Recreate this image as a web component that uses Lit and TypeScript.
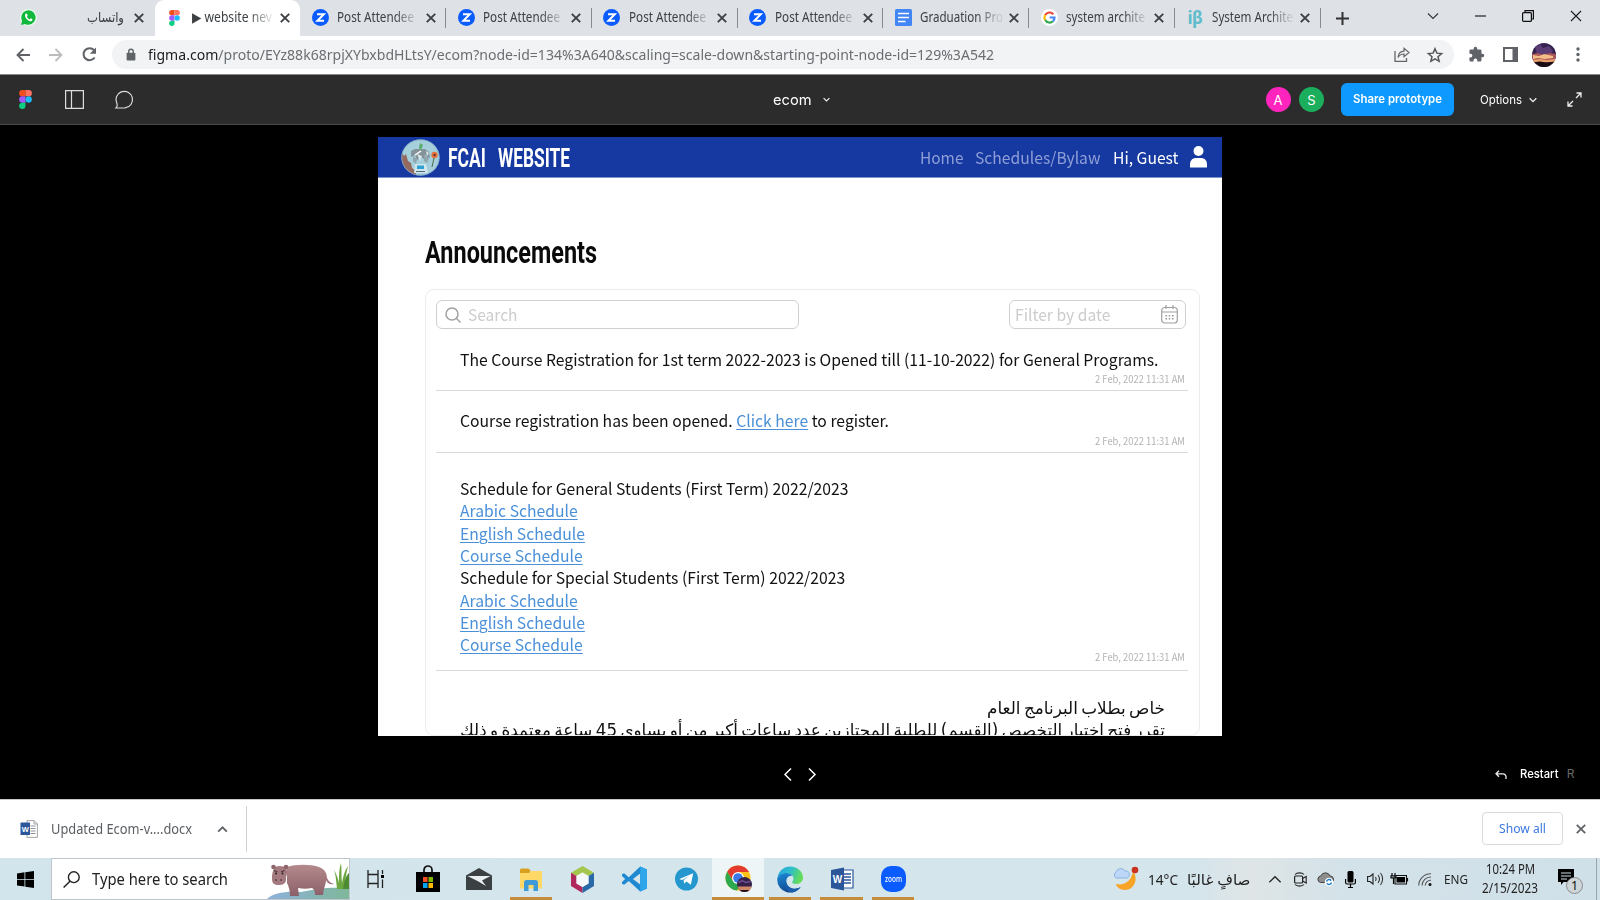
import { LitElement, html, svg, css } from "lit";
import { customElement, property } from "lit/decorators.js";

/** One line of text, condensed or widened to an exact measure. */
@customElement("fit-text")
class FitText extends LitElement {
  @property({ type: Number }) w = 0;
  static styles = css`
    :host { display: inline-block; white-space: nowrap; text-align: left; flex: none; }
    span { display: inline-block; white-space: nowrap; transform-origin: 0 50%; }
  `;
  render() {
    return html`<span><slot></slot></span>`;
  }
  firstUpdated() {
    const s = this.renderRoot.querySelector("span") as HTMLElement;
    this.style.width = "max-content";
    const n = s.getBoundingClientRect().width;
    this.style.width = this.w + "px";
    if (n) s.style.transform = `scaleX(${this.w / n})`;
    this.style.direction = "ltr";
  }
}

const ic = (w: number, h: number, vb: string, body: unknown) =>
  html`<svg width=${w} height=${h} viewBox=${vb} fill="none">${body}</svg>`;

const close = (n = 10, c = "#3c4043", sw = 1.9) =>
  ic(n, n, "0 0 10 10", svg`<path d="M.8.8l8.4 8.4M9.2.8L.8 9.2" stroke=${c} stroke-width=${sw}/>`);

const figma = (w: number, h: number) =>
  ic(w, h, "0 0 12 18", svg`
    <path d="M3 0h3v6H3a3 3 0 010-6z" fill="#f24e1e"/><path d="M6 0h3a3 3 0 010 6H6z" fill="#ff7262"/>
    <path d="M3 6h3v6H3a3 3 0 010-6z" fill="#a259ff"/><circle cx="9" cy="9" r="3" fill="#1abcfe"/>
    <path d="M3 12h3v3a3 3 0 11-3-3z" fill="#0acf83"/>`);

const icons: Record<string, () => unknown> = {
  wa: () => ic(17, 17, "0 0 16 16", svg`<circle cx="8" cy="8" r="8" fill="#e9fbee"/><path d="M1 15l1-3.7A6.8 6.8 0 118 14.8a7 7 0 01-3.300-.8z" fill="#12b83c"/><path d="M5.500 4.200c-1.600 1.600-.5 4 1.500 5.800 1.800 1.600 3.800 2 4.600.6.4-.8.2-1-1.600-1.800l-1 1C7.700 9.200 6.900 8.200 6.500 7.300l.8-1-.8-2z" fill="#fff"/>`),
  fg: () => figma(11, 16),
  zm: () => ic(17, 17, "0 0 17 17", svg`<circle cx="8.500" cy="8.500" r="8.500" fill="#0b5cff"/><path d="M5 5.200h6.800L5.400 11.800H12" stroke="#fff" stroke-width="2"/>`),
  doc: () => ic(17, 17, "0 0 17 17", svg`<rect width="17" height="17" rx="1.500" fill="#4285f4"/><path d="M3 4.500h11M3 8.500h11M3 12.500h7.500" stroke="#fff" stroke-width="1.700"/>`),
  g: () => ic(17, 17, "0 0 17 17", svg`<circle cx="8.500" cy="8.500" r="8.500" fill="#fff"/><g stroke-width="2.200"><path d="M12.300 5.200A5 5 0 004.200 6" stroke="#ea4335"/><path d="M4.200 6a5 5 0 000 5" stroke="#fbbc05"/><path d="M4.200 11a5 5 0 007.800 1.200" stroke="#34a853"/><path d="M12 12.200A5 5 0 0013.500 8.500H8.700" stroke="#4285f4"/></g>`),
  ib: () => html`<b class="ib">iβ</b>`,
};

const TABS = [
  { i: "wa", t: "واتساب", w: 37, rtl: true },
  { i: "fg", t: "▶ website nev", w: 80, on: true },
  { i: "zm", t: "Post Attendee", w: 77 },
  { i: "zm", t: "Post Attendee", w: 77 },
  { i: "zm", t: "Post Attendee", w: 77 },
  { i: "zm", t: "Post Attendee", w: 77 },
  { i: "doc", t: "Graduation Pro", w: 83 },
  { i: "g", t: "system archite", w: 79 },
  { i: "ib", t: "System Archite", w: 81 },
];

const chev = (w: number, h: number, d: string, c: string, sw = 1.3) =>
  ic(w, h, "0 0 12 8", svg`<path d=${d} stroke=${c} stroke-width=${sw}/>`);
const DOWN = "M1 1.500l5 5 5-5";
const UP = "M1 6.500l5-5 5 5";

const wordIcon = (s: number) =>
  ic(s, s, "0 0 24 24", svg`<path d="M12 3h11v18H12z" fill="#fff" stroke="#2b579a" stroke-width="1.200"/><path d="M14 7h7M14 10h7M14 13h7M14 16h7" stroke="#2b579a" stroke-width="1.300"/><path d="M1 3l13-2.500v23L1 21z" fill="#2b579a"/><text x="7.400" y="15.700" font-family="Liberation Sans" font-weight="700" font-size="10" text-anchor="middle" fill="#fff">W</text>`);

const docIcon = () =>
  ic(18, 18, "0 0 18 18", svg`<path d="M7 .6h7l3.400 3.400v13.400H7z" fill="#fff" stroke="#9a9a9a" stroke-width=".9"/><path d="M14 .6V4h3.400" stroke="#9a9a9a" stroke-width=".9"/><path d="M10.500 6h5M10.500 8.500h5M10.500 11h5M10.500 13.500h5" stroke="#8d9299" stroke-width="1"/><path d="M.5 2.500h9.500v12.500H.5z" fill="#2b579a"/><text x="5.200" y="11.500" font-family="Liberation Sans" font-weight="700" font-size="7.500" text-anchor="middle" fill="#fff">W</text>`);

const APPS = [
  { i: ic(17, 18, "0 0 17 18", svg`<path d="M1 0v4.500h10V0M1 18v-4.500h10V18M1 4.500v9M11 4.500v9M15.500 0v4M15.500 9.500V18" stroke="#222" stroke-width="1.300"/><path d="M14 5h3v3h-3z" fill="#000"/>`) },
  { i: ic(24, 28, "0 0 24 28", svg`<path d="M8 8V5a4 4 0 018 0v3" stroke="#111" stroke-width="1.700"/><path d="M0 7h24v20H0z" fill="#000"/><path d="M7 12h4.500v5H7z" fill="#f25022"/><path d="M12.500 12H17v5h-4.500z" fill="#7fba00"/><path d="M7 18h4.500v5H7z" fill="#00a4ef"/><path d="M12.500 18H17v5h-4.500z" fill="#ffb900"/>`) },
  { i: ic(26, 22, "0 0 26 22", svg`<path d="M0 7.500L13 0l13 7.500V22H0z" fill="#3b4043"/><path d="M1.500 8h23L16 12.500l4 5.500L11.500 13z" fill="#e8f0f2"/>`) },
  { u: 1, i: ic(24, 23, "0 0 24 23", svg`<path d="M1 2a1.500 1.500 0 011.500-1.500h7L12 3h-1v4H1z" fill="#d9a020"/><path d="M1 5h9l2-2h11v17.500H1z" fill="#ffd866"/><path d="M5 23v-8.500A2.500 2.500 0 017.500 12h9a2.500 2.500 0 012.500 2.500V23h-4.500v-6h-5v6z" fill="#3f9bd8"/>`) },
  { i: ic(23, 27, "0 0 23 27", svg`<path d="M11.500 0L23 6.800 17.500 10l-6-3.500L5.500 10 0 6.800z" fill="#a4c64c"/><path d="M0 6.800L5.500 10v7.500l6 3.500v6L0 20z" fill="#b0275c"/><path d="M23 6.800L17.500 10v7.500l-6 3.500v6L23 20z" fill="#2a68a8"/><path d="M11.500 6.500l6 3.500v7.500l-6 3.500-6-3.500V10z" fill="#f4f8fa"/>`) },
  { i: ic(25, 26, "0 0 24 24", svg`<path d="M17.500 0L24 2.800v18.400L17.500 24 6.500 13.800 2 17.500 0 16.500v-1.700L3 12 0 9.200V7.500l2-1 4.500 3.700zM17.500 6.800L10.500 12l7 5.200z" fill="#1f8ad2" fill-rule="evenodd"/><path d="M17.500 0L24 2.800v18.400L17.500 24z" fill="#2fa5ea"/>`) },
  { i: ic(23, 24, "0 0 24 24", svg`<circle cx="12" cy="12" r="12" fill="#2497cf"/><path d="M4.500 12L19 6l-2.500 12-4.500-3.400-2.500 2.400-.5-4 6-4.500-7.500 4.500z" fill="#fff"/>`) },
  { u: 1, on: true, i: ic(28, 30, "0 0 28 30", svg`<circle cx="14" cy="14" r="12.500" fill="#fbc116"/><path d="M3.200 7.700L9 17l5-9h11A12.500 12.500 0 003.200 7.700z" fill="#e33b2e"/><path d="M3.200 7.700A12.500 12.500 0 0013 26.500l4-7.500-8-2z" fill="#2da94f"/><circle cx="14" cy="14" r="6" fill="#fff"/><circle cx="14" cy="14" r="4.800" fill="#3c79e6"/><circle cx="20.500" cy="20.500" r="7.500" fill="#35204a"/><path d="M13.500 22.500h14a7.500 7.500 0 01-3 5h-8z" fill="#d08a68"/><path d="M15.500 26h10a7.500 7.500 0 01-10 0z" fill="#241018"/><path d="M14.500 18.500l4-2 3 2 5-1" stroke="#6f5091" stroke-width="1.500"/>`) },
  { u: 1, i: ic(26, 27, "0 0 24 24", svg`
    <defs><linearGradient id="e1" x1="0" y1="0" x2="1" y2=".3"><stop stop-color="#1f9fe0"/><stop offset=".55" stop-color="#2fc0c8"/><stop offset="1" stop-color="#62dc5a"/></linearGradient><linearGradient id="e2" x2=".3" y2="1"><stop stop-color="#1b8ad8"/><stop offset="1" stop-color="#114a8f"/></linearGradient></defs>
    <path d="M.4 10.500C1.300 4.500 6 0 12 0c7 0 12 5 12 10.200 0 3.800-3 6-6 6-2.500 0-4-.8-4-1.600s1.200-1.200 1.200-3.200C15.200 8.500 12.500 6 8.800 6 5 6 1.800 8 .4 10.500z" fill="url(#e1)"/>
    <path d="M.2 12C.2 8.500 4.500 6 8.800 6c2.500 0 4.500 1.200 5.600 2.800-3-.8-5.800 1.400-5.800 4.700 0 4 4 7 8 7 2.200 0 3.800-.6 5.400-1.500A12 12 0 01.2 12z" fill="url(#e2)"/>
    <path d="M8.700 14.500c.5 4 4.500 6.500 8 6 2-.1 4-.8 5-1.700 0 1-3.500 4.800-7.700 5.100C8 22.500 7 18 8.700 14.500z" fill="#1a5fae"/>`) },
  { u: 1, i: wordIcon(24) },
  { u: 1, i: html`<span class="zoomapp"><fit-text .w=${17}>zoom</fit-text></span>` },
];

const LINKS = [
  ["Schedule for General Students (First Term) 2022/2023", 388.5],
  ["Arabic Schedule", 117.7, 1],
  ["English Schedule", 124.9, 1],
  ["Course Schedule", 122.7, 1],
  ["Schedule for Special Students (First Term) 2022/2023", 385.2],
  ["Arabic Schedule", 117.7, 1],
  ["English Schedule", 124.9, 1],
  ["Course Schedule", 122.7, 1],
] as [string, number, number?][];

@customElement("app-root")
class AppRoot extends LitElement {
  static styles = css`
    :host { display: flex; flex-direction: column; width: 1600px; height: 900px; overflow: hidden; background: #000; font-family: "Noto Sans", "DejaVu Sans", sans-serif; color: #3c4043; }
    * { box-sizing: border-box; }
    svg { display: block; flex: none; overflow: visible; }
    .tabs { height: 36px; background: #dee1e6; display: flex; padding-left: 8.800px; flex: none; }
    .tab { width: 145.750px; flex: none; height: 36px; display: grid; grid-template-columns: 22px 82px 1fr; column-gap: 6px; padding: 0 10.500px 1px 9px; align-items: center; font-size: 13.500px; position: relative; }
    .tab > :first-child { justify-self: center; }
    .tab > :last-child { justify-self: end; }
    .tab::after { content: ""; position: absolute; right: 0; top: 8px; width: 1px; height: 20px; background: #868b90; }
    .tab.first::after, .tab.on::after { display: none; }
    .tab.on { background: #fff; border-radius: 9px 9px 0 0; }
    .lbl { overflow: hidden; white-space: nowrap; line-height: 20px; margin-top: -1px; -webkit-mask-image: linear-gradient(90deg, #000 70%, rgba(0,0,0,.15) 96%); mask-image: linear-gradient(90deg, #000 70%, rgba(0,0,0,.15) 96%); }
    .lbl.rtl { text-align: right; -webkit-mask: none; mask: none; margin-right: 3.500px; }
    .ib { font-size: 17px; color: #5fbccb; line-height: 20px; letter-spacing: -.5px; }
    .plus { width: 44px; display: grid; place-items: center; }
    .win { margin-left: auto; display: grid; grid-template-columns: repeat(3, 47.700px) 48px; align-items: center; justify-items: center; padding-bottom: 5px; }
    .tool { height: 38px; flex: none; background: #fff; display: flex; align-items: center; padding-bottom: 1px; }
    .cell { display: grid; place-items: center; flex: none; }
    .w33 { width: 33px; } .w34 { width: 34px; }
    .nav { display: flex; padding-left: 6.500px; width: 112px; flex: none; }
    .omni { width: 1342px; height: 29px; border-radius: 15px; background: #f1f3f4; display: flex; align-items: center; padding: 0 2.500px 0 14px; font-size: 15px; color: #6a6e72; }
    .url { margin-left: 12px; line-height: 24px; margin-top: -1px; }
    .url b { font-weight: 400; color: #202124; }
    .push { margin-left: auto; }
    .ext { display: flex; padding-left: 6px; }
    .ava { width: 24px; height: 24px; border-radius: 50%; overflow: hidden; }
    .fbar { height: 51px; flex: none; background: #2c2c2c; border-top: 1px solid #8a8a8a; border-bottom: 1px solid #484848; display: grid; grid-template-columns: 772.500px 1fr auto; align-items: center; font-family: Inter, sans-serif; color: #fff; }
    .row { display: flex; align-items: center; }
    .fl { padding-left: 18.500px; }
    .fl :nth-child(2) { margin-left: 33.500px; } .fl :nth-child(3) { margin-left: 31px; }
    .ecom { font-size: 14.500px; gap: 12px; line-height: 20px; }
    .who { width: 25px; height: 25px; border-radius: 50%; display: grid; place-items: center; font-size: 13px; margin-right: 8.500px; }
    .a { background: #ff24bd; } .s { background: #1bae5c; }
    .share { width: 113px; height: 33px; border-radius: 6px; background: #0d99ff; display: grid; place-items: center; font-size: 12px; font-weight: 600; margin-left: 8.500px; line-height: 20px; padding-bottom: 1px; }
    .opt { font-size: 12px; margin-left: 26px; gap: 6.500px; line-height: 20px; }
    .exp { margin: 0 18px 0 30.500px; }
    .stage { height: 674px; flex: none; padding: 12px 378px 0; display: flex; flex-direction: column; }
    .page { width: 844px; height: 599px; background: #fff; overflow: hidden; font-family: "Noto Sans CJK SC", sans-serif; color: #111; font-size: 16.300px; display: flex; flex-direction: column; }
    .head { height: 41px; flex: none; background: #1538a1; border-bottom: 1px solid #8093cd; display: flex; align-items: center; padding: 0 15px 0 22.500px; color: #fff; }
    .brand { font: 700 25px/34px "Roboto", sans-serif; margin: 3px 0 0 8px; }
    .brand + .brand { margin-left: 12px; }
    .menu { margin-left: auto; display: flex; line-height: 24px; gap: 12px; align-items: center; color: #8f9fd6; }
    .menu fit-text { margin-top: -1px; }
    .menu .hi { color: #fff; }
    h1 { margin: 53px 0 0 47px; font: 700 31px/44px "Roboto", sans-serif; height: 44px; color: #0a0a0a; flex: none; }
    .card { margin: 14px 0 0 47px; width: 775px; height: 447px; flex: none; border: 1px solid #ececec; border-radius: 9px; padding: 10px 10px 0; overflow: hidden; }
    .filters { display: flex; justify-content: space-between; padding-right: 3px; }
    .inp { height: 29px; border: 1px solid #cfcfcf; border-radius: 6px; display: flex; align-items: center; color: #ccc; line-height: 24px; padding: 0 8px; background: #fff; }
    .inp fit-text { margin-top: -2px; }
    .q { width: 363px; gap: 7px; } .d { width: 177px; justify-content: space-between; padding: 0 7px 0 5px; }
    .item { border-bottom: 1px solid #dadada; padding-left: 24px; display: flex; flex-direction: column; width: 752px; line-height: 22.300px; flex: none; }
    .i1 { height: 61.500px; padding-top: 18.500px; } .i2 { height: 62px; padding-top: 18.500px; } .i3 { height: 218px; padding-top: 24.700px; }
    .item .line { height: 22.300px; white-space: pre; display: block; flex: none; }
    .date { font-size: 10px; line-height: 12px; color: #b3b3b3; margin: auto 3px 5px auto; height: 12px; flex: none; }
    .i3 .date { margin: -5px 3px 0 auto; }
    a { color: #4a90d9; text-decoration: underline; text-decoration-thickness: 1px; text-underline-offset: 2px; }
    .ar { font-family: "DejaVu Sans", sans-serif; padding: 26px 24px 0; direction: rtl; line-height: 22px; font-size: 17px; word-spacing: -2px; }
    .ar div { height: 22px; }
    .foot { flex: 1; display: grid; grid-template-columns: 1fr 46px 1fr; margin-right: -378px; margin-left: -378px; align-items: center; color: #fff; font-family: Inter, sans-serif; padding-top: 13px; }
    .pg { display: flex; justify-content: center; gap: 16px; }
    .rs { justify-self: end; display: flex; align-items: center; font-size: 12px; font-weight: 500; margin-right: 25.500px; line-height: 16px; }
    .rs svg { margin-right: 13px; } .rs .r { margin-left: 8px; color: #6a6a6a; font-weight: 400; }
    .dl { height: 59px; flex: none; background: #fff; border-top: 1px solid #c9c9c9; display: flex; align-items: center; font-size: 13.500px; color: #5a5e62; padding: 0 14px 0 20px; }
    .dl .name { margin: 0 24.500px 0 13px; }
    .dl .sep { width: 1px; height: 46px; background: #cfd1d4; margin-left: 18.500px; }
    .all { margin-left: auto; width: 81px; height: 33px; border: 1px solid #d8dadd; border-radius: 4px; display: grid; place-items: center; color: #3b78e0; margin-right: 13px; font-size: 13px; line-height: 20px; margin-top: -1px; padding-bottom: 1px; }
    .task { height: 42px; flex: none; background: linear-gradient(90deg, #d3e5ec, #d5e5ec 75%, #dfe5e6 78%, #d3e2e9 84%, #d0e0e8); display: flex; color: #222; }
    .start { width: 50.500px; display: grid; place-items: center; }
    .search { width: 299.500px; background: #fff; border: 1px solid #bcc6cb; display: flex; align-items: center; padding-left: 11px; font-size: 16px; line-height: 24px; overflow: hidden; }
    .search .t { margin: 0 38.500px 0 12.500px; }
    .app { width: 51.750px; display: grid; place-items: center; position: relative; }
    .app.on { background: #eef5f7; }
    .app.u::after { content: ""; position: absolute; left: 4.500px; right: 5px; bottom: 0; height: 3px; background: #c68c3c; }
    .app.on::after { left: 0; right: 0; }
    .zoomapp { width: 25px; height: 26px; border-radius: 10px; background: #0b5cff; color: #fff; display: grid; place-items: center; font-size: 8px; line-height: 12px; font-weight: 500; }
    .tray { margin-left: auto; display: flex; align-items: center; font-size: 15px; }
    .up { width: 38px; padding-left: 11px; }
    .t24 { width: 24.800px; }
    .wx { margin: 0 9px 0 8.500px; line-height: 20px; }
    .clock { display: grid; justify-items: center; font-size: 13.500px; line-height: 19px; width: 56px; margin-left: 14px; }
    .note { margin: 4px 13.500px 0 19.500px; }
    .edge { width: 4px; height: 42px; border-left: 1px solid #9aa5aa; }
    .eng { font-size: 13px; margin-left: 7px; }
  `;

  date() {
    return html`<div class="date"><fit-text .w=${90}>2 Feb, 2022 11:31 AM</fit-text></div>`;
  }

  render() {
    return html`
      <div class="tabs">
        ${TABS.map((t, n) => html`<div class="tab ${t.on ? "on" : ""} ${n ? "" : "first"}">
          <span>${icons[t.i]()}</span><span class="lbl ${t.rtl ? "rtl" : ""}"><fit-text .w=${t.w}>${t.t}</fit-text></span>${close()}</div>`)}
        <div class="plus">${ic(13, 13, "0 0 13 13", svg`<path d="M6.500 0v13M0 6.500h13" stroke="#333" stroke-width="2"/>`)}</div>
        <div class="win">
          ${chev(12, 8, DOWN, "#333", 1.1)}
          ${ic(11, 2, "0 0 11 2", svg`<path d="M0 1h11" stroke="#222" stroke-width="1.200"/>`)}
          ${ic(12, 12, "0 0 12 12", svg`<rect x=".6" y="2.600" width="8.800" height="8.800" rx="1" stroke="#111" stroke-width="1.200"/><path d="M3 2V.6h8.400V9H10" stroke="#111" stroke-width="1.200"/>`)}
          ${close(12, "#222", 1)}
        </div>
      </div>
      <div class="tool">
        <div class="nav">
          <div class="cell w33">${ic(14, 14, "0 0 14 14", svg`<path d="M14 7H1.500M7.500 1l-6 6 6 6" stroke="#5f6368" stroke-width="1.900"/>`)}</div>
          <div class="cell w33">${ic(14, 14, "0 0 14 14", svg`<path d="M0 7h12.500M6.500 1l6 6-6 6" stroke="#babcbe" stroke-width="1.800"/>`)}</div>
          <div class="cell w34">${ic(15, 15, "0 0 15 15", svg`<path d="M12.600 10.500a6 6 0 11-.5-7.300" stroke="#5f6368" stroke-width="2"/><path d="M14 .5v6.200H7.800z" fill="#5f6368"/>`)}</div>
        </div>
        <div class="omni">
          ${ic(10, 13, "0 0 11 13", svg`<rect x=".7" y="4.500" width="9.600" height="8.500" rx="1" fill="#5f6368"/><path d="M3 5V3.200a2.500 2.500 0 015 0V5" stroke="#5f6368" stroke-width="1.500"/>`)}
          <span class="url"><fit-text .w=${846}><b>figma.com</b>/proto/EYz88k68rpjXYbxbdHLtsY/ecom?node-id=134%3A640&scaling=scale-down&starting-point-node-id=129%3A542</fit-text></span>
          <div class="cell w34 push">${ic(16, 15, "0 0 16 15", svg`<path d="M1 4v10.300h11.500V11" stroke="#666" stroke-width="1.300"/><path d="M4 10.500C4.500 6 7 4.300 10 4.200V1.200l5 4.300-5 4.300V7C7.500 7 5.500 8 4 10.500z" stroke="#666" stroke-width="1.200"/>`)}</div>
          <div class="cell w33">${ic(16, 16, "0 0 24 24", svg`<path d="M12 2.500l2.800 6.700 7.200.6-5.500 4.700 1.700 7L12 17.800l-6.200 3.700 1.700-7L2 9.800l7.200-.6z" stroke="#555" stroke-width="2.200"/>`)}</div>
        </div>
        <div class="ext">
          <div class="cell w33">${ic(17, 17, "0 0 24 24", svg`<path d="M20.500 11H19V7a2 2 0 00-2-2h-4V3.500a2.500 2.500 0 00-5 0V5H4a2 2 0 00-2 2v3.800h1.500a2.700 2.700 0 010 5.400H2V20a2 2 0 002 2h3.800v-1.500a2.700 2.700 0 015.400 0V22H17a2 2 0 002-2v-4h1.500a2.500 2.500 0 000-5z" fill="#5f6368"/>`)}</div>
          <div class="cell w34">${ic(15, 15, "0 0 15 15", svg`<path d="M1 1h13v13H1z" stroke="#5f6368" stroke-width="2"/><path d="M9.500 1H14v13H9.500z" fill="#5f6368"/>`)}</div>
          <div class="cell w34"><div class="ava">${ic(24, 24, "0 0 24 24", svg`<path d="M0 0h24v24H0z" fill="#35224e"/><path d="M3 4l5-3 3 4 6-2 4 5-3 3H5z" fill="#5b3d76"/><path d="M0 11l6-1 5 2 7-2 6 1v9H0z" fill="#a8565a"/><path d="M1 12l6 1 5-2 9 2v2l-8 1-7-1-5 1z" fill="#f3bd88"/><path d="M0 17l8-1 7 1 9-1v3H0z" fill="#e8a06a"/><path d="M0 19.500l8-1 6 1 10-1V24H0z" fill="#180c14"/>`)}</div></div>
          <div class="cell w33">${ic(4, 15, "0 0 4 15", svg`<g fill="#5f6368"><circle cx="2" cy="2" r="1.700"/><circle cx="2" cy="7.500" r="1.700"/><circle cx="2" cy="13" r="1.700"/></g>`)}</div>
        </div>
      </div>
      <div class="fbar">
        <div class="row fl">
          ${figma(13, 19)}
          ${ic(19, 19, "0 0 19 19", svg`<path d="M.6.6h17.800v17.800H.6zM6.500 1v17" stroke="#ddd" stroke-width="1.200"/>`)}
          ${ic(19, 19, "0 0 19 19", svg`<path d="M1 18c1.400-1.500 1.500-3 1-4.300A8.300 8.300 0 1110 17.900z" stroke="#ddd" stroke-width="1.200"/>`)}
        </div>
        <div class="row ecom"><fit-text .w=${38.5}>ecom</fit-text>${chev(7, 5, DOWN, "#eee", 2)}</div>
        <div class="row">
          <span class="who a">A</span><span class="who s">S</span>
          <span class="share"><fit-text .w=${89}>Share prototype</fit-text></span>
          <span class="row opt"><fit-text .w=${42}>Options</fit-text>${chev(8, 6, DOWN, "#eee", 2)}</span>
          <span class="exp">${ic(15, 15, "0 0 15 15", svg`<path d="M9.500 1H14v4.500M14 1L9 6M5.500 14H1V9.500M1 14l5-5" stroke="#eee" stroke-width="1.300"/>`)}</span>
        </div>
      </div>
      <div class="stage">
        <div class="page">
          <div class="head">
            ${this.logo()}
            <span class="brand"><fit-text .w=${38}>FCAI</fit-text></span><span class="brand"><fit-text .w=${72}>WEBSITE</fit-text></span>
            <div class="menu">
              <fit-text .w=${43.5}>Home</fit-text><fit-text .w=${125.5}>Schedules/Bylaw</fit-text><fit-text class="hi" .w=${65.5}>Hi, Guest</fit-text>
              ${ic(17, 22, "0 0 17 22", svg`<circle cx="8.500" cy="5" r="5" fill="#fff"/><path d="M0 21.500v-3C0 14 3 12 6 12h5c3 0 6 2 6 6.500v3z" fill="#fff"/>`)}
            </div>
          </div>
          <h1><fit-text .w=${172}>Announcements</fit-text></h1>
          <div class="card">
            <div class="filters">
              <div class="inp q">${ic(16, 16, "0 0 16 16", svg`<circle cx="7" cy="7" r="6" stroke="#a0a0a0" stroke-width="1.500"/><path d="M11.500 11.500l4 4" stroke="#a0a0a0" stroke-width="1.500"/>`)}<fit-text .w=${49.5}>Search</fit-text></div>
              <div class="inp d"><fit-text .w=${95.5}>Filter by date</fit-text>${ic(17, 19, "0 0 17 19", svg`<rect x=".7" y="2.500" width="15.600" height="15.500" rx="3" stroke="#a0a0a0" stroke-width="1.200"/><path d="M1 7h15M5 0v4M12 0v4" stroke="#a0a0a0" stroke-width="1.200"/><path d="M4.500 10.700h8M4.500 13.700h8" stroke="#999" stroke-width="1.600" stroke-dasharray="1.600 1.600"/>`)}</div>
            </div>
            <div class="item i1">
              <span class="line"><fit-text .w=${698.5}>The Course Registration for 1st term 2022-2023 is Opened till (11-10-2022) for General Programs.</fit-text></span>
              ${this.date()}
            </div>
            <div class="item i2">
              <span class="line"><fit-text .w=${429}>Course registration has been opened. <a>Click here</a> to register.</fit-text></span>
              ${this.date()}
            </div>
            <div class="item i3">
              ${LINKS.map(([t, w, l]) => html`<span class="line"><fit-text .w=${w}>${l ? html`<a>${t}</a>` : t}</fit-text></span>`)}
              ${this.date()}
            </div>
            <div class="ar">
              <div><fit-text .w=${178}><span dir="rtl">خاص بطلاب البرنامج العام</span></fit-text></div>
              <div><fit-text .w=${705}><span dir="rtl">تقرر فتح اختيار التخصص (القسم) للطلبة المجتازين عدد ساعات أكبر من أو يساوى 45 ساعة معتمدة و ذلك</span></fit-text></div>
            </div>
          </div>
        </div>
        <div class="foot">
          <span></span>
          <div class="pg">${ic(8, 13, "0 0 8 13", svg`<path d="M7 .5l-6 6 6 6" stroke="#fff" stroke-width="1.500"/>`)}${ic(8, 13, "0 0 8 13", svg`<path d="M1 .5l6 6-6 6" stroke="#fff" stroke-width="1.500"/>`)}</div>
          <div class="rs">${ic(12, 9, "0 0 12 9", svg`<path d="M4 .8L1 3.800l3 3M1 3.800h7a3 3 0 013 3V9" stroke="#eee" stroke-width="1.300"/>`)}<fit-text .w=${38.5}>Restart</fit-text><span class="r">R</span></div>
        </div>
      </div>
      <div class="dl">
        ${docIcon()}
        <span class="name"><fit-text .w=${141}>Updated Ecom-v....docx</fit-text></span>
        ${chev(11, 7, UP, "#5f6368", 2)}
        <span class="sep"></span>
        <span class="all"><fit-text .w=${47}>Show all</fit-text></span>
        ${close(10, "#5f6368", 1.8)}
      </div>
      <div class="task">
        <div class="start">${ic(17, 17, "0 0 17 17", svg`<path d="M0 2.400L7.500 1.300V8H0zM8.300 1.200L17 0v8H8.300zM0 8.800h7.500v6.800L0 14.500zM8.300 8.800H17V17l-8.700-1.200z" fill="#000"/>`)}</div>
        <div class="search">
          ${ic(17, 17, "0 0 17 17", svg`<circle cx="10.800" cy="6.200" r="5.400" stroke="#222" stroke-width="1.400"/><path d="M7 10.200L.6 16.500" stroke="#222" stroke-width="1.500"/>`)}
          <span class="t"><fit-text .w=${136}>Type here to search</fit-text></span>
          ${this.hippo()}
        </div>
        ${APPS.map((a) => html`<div class="app ${a.u ? "u" : ""} ${a.on ? "on" : ""}">${a.i}</div>`)}
        <div class="tray">
          ${ic(26, 24, "0 0 26 24", svg`<path d="M20 4c6 8 1 19-8 19-5 0-8-3-9.500-6C12 19 19 13 20 4z" fill="#f7a326"/><path d="M3 11a3.500 3.500 0 010-6 5 5 0 019-1 3.500 3.500 0 011.500 7z" fill="#bcd7f8" stroke="#7fa7e0" stroke-width=".8"/><circle cx="22" cy="3" r="3.300" fill="#c8321f"/>`)}
          <span class="wx"><fit-text .w=${30}>14°C</fit-text></span>
          <fit-text .w=${63.5}>صافٍ غالبًا</fit-text>
          <div class="cell up">${chev(14, 9, UP, "#222", 1.1)}</div>
          <div class="cell t24">${ic(13, 15, "0 0 13 15", svg`<rect x=".6" y="4" width="8" height="7" rx="1" stroke="#222" stroke-width="1.200"/><path d="M8.600 6.500l3.600-2v6.500l-3.600-2M1 2.500C3 .3 8 .3 10 2.500M1 12.500c2 2.200 7 2.200 9 0" stroke="#222" stroke-width="1.100"/>`)}</div>
          <div class="cell t24">${ic(17, 14, "0 0 17 14", svg`<path d="M3.500 10.500a3.300 3.300 0 01.3-6.500 5 5 0 019.300 0 3.300 3.300 0 01.9 6.500z" fill="#8e8e8e" stroke="#444" stroke-width="1"/><circle cx="12" cy="10" r="4.300" fill="#fff"/><path d="M9.500 9.500a2.600 2.600 0 014.700-.8M14.500 10.500a2.600 2.600 0 01-4.700.8" stroke="#1479c8" stroke-width="1.300"/>`)}</div>
          <div class="cell t24">${ic(11, 17, "0 0 11 17", svg`<rect x="2.500" y="0" width="6" height="11.500" rx="1.500" fill="#000"/><path d="M.6 8v3.500a1.500 1.500 0 001.500 1.500h6.800a1.500 1.500 0 001.500-1.500V8M5.500 13v3.500M3 16.500h5" stroke="#000" stroke-width="1.200"/>`)}</div>
          <div class="cell t24">${ic(17, 14, "0 0 17 14", svg`<path d="M.6 4.500H3L6 2v10L3 9.500H.6z" stroke="#222" stroke-width="1.100"/><path d="M8.500 5c.8 1.200.8 2.800 0 4M11 3c1.700 2.300 1.700 5.700 0 8M13.500 1c2.800 3.500 2.800 8.500 0 12" stroke="#333" stroke-width="1.100"/>`)}</div>
          <div class="cell t24">${ic(17, 12, "0 0 17 12", svg`<path d="M4 2.500h11.500v8.500H4z" stroke="#111" stroke-width="1.100"/><path d="M5.500 4H14v5.500H5.500z" fill="#000"/><path d="M16.500 5v3.500M1 0v2.500M4 0v2.500M0 2.800h5v2H0zM2.500 5v6" stroke="#111" stroke-width="1.200"/>`)}</div>
          <div class="cell t24">${ic(14, 13, "0 0 14 13", svg`<path d="M.7 12.500A12 12 0 0113 .7M4 12.500A8.700 8.700 0 0113 4M7.200 12.500A5.500 5.500 0 0113 7.300" stroke="#555" stroke-width="1.100"/><circle cx="12" cy="11.500" r="1.500" fill="#111"/>`)}</div>
          <span class="eng"><fit-text .w=${24}>ENG</fit-text></span>
          <div class="clock"><fit-text .w=${49}>10:24 PM</fit-text><fit-text .w=${56}>2/15/2023</fit-text></div>
          <div class="note">${ic(25, 25, "0 0 25 25", svg`<path d="M0 0h16v13H5.500L3 16v-3H0z" fill="#000"/><path d="M3 4h10M3 7h10M3 10h6" stroke="#cfe0e6" stroke-width="1.200"/><circle cx="16.500" cy="16.500" r="8" fill="#cfd6d9" stroke="#777" stroke-width=".8"/><text x="16.500" y="21" font-family="Noto Sans" font-size="12.500" text-anchor="middle" fill="#111">1</text>`)}</div>
          <span class="edge"></span>
        </div>
      </div>
    `;
  }

  logo() {
    return ic(39, 37, "0 0 39 37", svg`
      <clipPath id="lc"><ellipse cx="19.500" cy="18.500" rx="19" ry="18"/></clipPath>
      <g clip-path="url(#lc)"><path d="M0 0h39v37H0z" fill="#a5cfdb"/>
      <path d="M0 12l3 5 2-2 2 7 3 2 1 5 4 3v5H0z" fill="#96695f"/>
      <path d="M10 12l4-2h10l4 3 1 6-3-1-1-3-2 5-3-2-4 3-2-5-4 2z" fill="#84939a"/>
      <path d="M12 17l4 3-1 5-3-3zM23 16l5 3-2 5-3-2z" fill="#90a5ac"/>
      <path d="M16 15l5 2-2 5zM25 12l3 2-2 3z" fill="#dbe6e8"/>
      <path d="M19 4l3 2-2 5-2-2z" fill="#58ad6c"/><path d="M14 16l6-4" stroke="#fff" stroke-width="1.500"/>
      <path d="M14 25h11l2 9H13z" fill="#cfe6ec"/><path d="M16 26.500h7v3.500h-7z" fill="#2f9fd4"/><path d="M15 32.500h9" stroke="#567" stroke-width="1.200"/>
      <circle cx="33.500" cy="16" r="3.200" fill="#e5713c"/><circle cx="33.500" cy="16" r="1.200" fill="#633"/><path d="M33 19l-2 9" stroke="#4a6b50"/></g>
      <ellipse cx="19.500" cy="18.500" rx="18.700" ry="17.700" stroke="#7fa4c6" stroke-width=".8"/>`);
  }

  hippo() {
    return ic(82, 40, "0 0 82 40", svg`
      <defs><linearGradient id="hg" x2="0" y2="1"><stop stop-color="#b48a8d"/><stop offset="1" stop-color="#8b6069"/></linearGradient><linearGradient id="hill"><stop stop-color="#8fb1dc"/><stop offset="1" stop-color="#7fb79a"/></linearGradient></defs>
      <path d="M-1 41c6-7 18-9 35-8 14-3 34-6 48-3v11z" fill="url(#hill)"/>
      <path d="M70 30c-1-8-1-14-3-19 3 5 4 9 5 13 0-8 0-14 2-20 1 7 0 14 1 20 1-7 3-13 6-17-2 8-3 15-3 23z" fill="#6ba640"/><path d="M76 30c1-6 2-12 6-16v16z" fill="#4d8a34"/>
      <path d="M20 8c8-3 24-3 32 0 6 2 8 7 8 11 2 4 4 5 7 6-4 1-7-1-8-4 0 4-2 7-3 15h-8c0-4-1-6-3-7-5 1-9 1-14 0l1 8h-9c0-5-1-9-3-13z" fill="url(#hg)"/>
      <path d="M8 8c4-2 9-1 11 1 2 3 1 7 0 9 1 5-2 8-6 8S5 26 5 20c0-3 0-8 3-12z" fill="#a47a80"/>
      <circle cx="6.500" cy="8" r="2.300" fill="#8e646c"/><circle cx="19" cy="8" r="2.300" fill="#8e646c"/>
      <path d="M7 11.500l3.500 1.500M17.500 11.500L14 13" stroke="#4c363c" stroke-width="1.100"/><circle cx="9" cy="14.500" r="1" fill="#222"/><circle cx="15.500" cy="14.500" r="1" fill="#222"/>
      <circle cx="9" cy="21" r=".9" fill="#5e3f48"/><circle cx="14" cy="21" r=".9" fill="#5e3f48"/>`);
  }
}
